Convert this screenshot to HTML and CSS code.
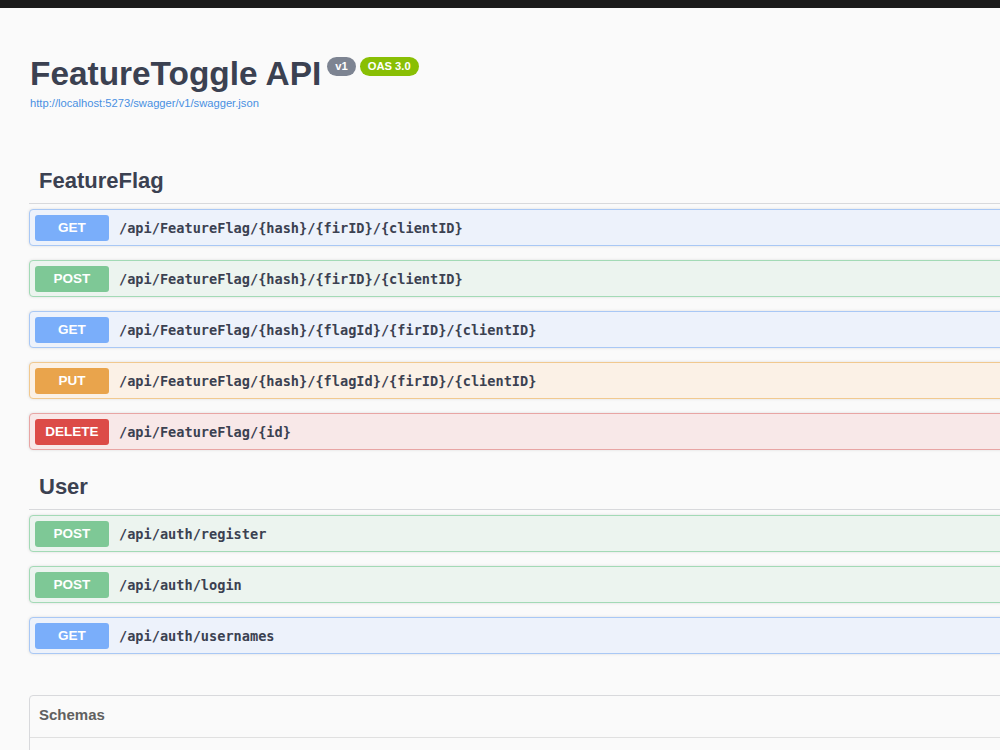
FILE: index.html
```html
<!DOCTYPE html>
<html lang="en">
<head>
<meta charset="utf-8">
<title>FeatureToggle API</title>
<link rel="stylesheet" href="styles.css">
</head>
<body>
<div class="topbar"></div>
<div class="wrapper">
  <section class="info">
    <h2 class="title">
      <span class="title-text">FeatureToggle API</span>
      <span class="badge badge-version">v1</span>
      <span class="badge badge-oas">OAS 3.0</span>
    </h2>
    <a class="spec-link" href="#">http://localhost:5273/swagger/v1/swagger.json</a>
  </section>

  <section class="tag-section">
    <h3 class="tag">FeatureFlag</h3>
    <div class="opblock op-get"><span class="method">GET</span><span class="path">/api/FeatureFlag/{hash}/{firID}/{clientID}</span></div>
    <div class="opblock op-post"><span class="method">POST</span><span class="path">/api/FeatureFlag/{hash}/{firID}/{clientID}</span></div>
    <div class="opblock op-get"><span class="method">GET</span><span class="path">/api/FeatureFlag/{hash}/{flagId}/{firID}/{clientID}</span></div>
    <div class="opblock op-put"><span class="method">PUT</span><span class="path">/api/FeatureFlag/{hash}/{flagId}/{firID}/{clientID}</span></div>
    <div class="opblock op-delete"><span class="method">DELETE</span><span class="path">/api/FeatureFlag/{id}</span></div>
  </section>

  <section class="tag-section">
    <h3 class="tag">User</h3>
    <div class="opblock op-post"><span class="method">POST</span><span class="path">/api/auth/register</span></div>
    <div class="opblock op-post"><span class="method">POST</span><span class="path">/api/auth/login</span></div>
    <div class="opblock op-get"><span class="method">GET</span><span class="path">/api/auth/usernames</span></div>
  </section>

  <section class="models">
    <h4 class="models-title">Schemas</h4>
    <div class="models-body"></div>
  </section>
</div>
</body>
</html>
```

FILE: styles.css
```css
html, body {
  margin: 0;
  padding: 0;
  overflow: hidden;
}
body {
  background: #fafafa;
  font-family: "Liberation Sans", Arial, sans-serif;
  color: #3b4151;
}
.topbar {
  height: 8px;
  background: #1b1b1b;
}
.wrapper {
  width: 1100px;
  padding-left: 29px;
}
.info {
  margin-top: 46px;
}
.title {
  display: flex;
  align-items: flex-start;
  margin: 0;
  font-size: 33.4px;
  line-height: 40px;
  font-weight: bold;
  color: #3b4151;
  padding-left: 1px;
}
.badge {
  display: inline-block;
  margin-top: 3px;
  height: 19px;
  line-height: 19px;
  padding: 0 8px;
  border-radius: 10px;
  font-size: 11.2px;
  font-weight: bold;
  color: #fff;
}
.badge-version {
  background: #7d8492;
  margin-left: 6px;
}
.badge-oas {
  background: #89bf04;
  margin-left: 4px;
}
.spec-link {
  display: block;
  margin-top: 2px;
  padding-left: 1px;
  font-size: 11.2px;
  line-height: 14px;
  color: #4990e2;
  text-decoration: none;
}
.info + .tag-section {
  margin-top: 48px;
}
.tag {
  margin: 0 0 5px;
  height: 45px;
  line-height: 45px;
  padding-left: 10px;
  font-size: 22px;
  font-weight: bold;
  color: #3b4151;
  border-bottom: 1px solid #d8d9dc;
}
.opblock {
  display: flex;
  align-items: center;
  height: 35px;
  margin-bottom: 14px;
  padding: 0 5px;
  border: 1px solid;
  border-radius: 4px;
  box-shadow: 0 0 3px rgba(0, 0, 0, 0.12);
}
.method {
  width: 74px;
  height: 26px;
  line-height: 26px;
  text-align: center;
  border-radius: 3px;
  color: #fff;
  font-size: 13.5px;
  font-weight: bold;
  flex-shrink: 0;
}
.path {
  margin-left: 10px;
  font-family: "DejaVu Sans Mono", monospace;
  font-weight: bold;
  font-size: 13.6px;
  color: #3b4151;
}
.op-get {
  background: #edf2fb;
  border-color: #a9c8f5;
}
.op-get .method {
  background: #7aaefa;
}
.op-post {
  background: #ecf4ef;
  border-color: #a3dab6;
}
.op-post .method {
  background: #7ec896;
}
.op-put {
  background: #fbf1e6;
  border-color: #f1c98f;
}
.op-put .method {
  background: #e9a44c;
}
.op-delete {
  background: #f8e8e8;
  border-color: #e8a5a4;
}
.op-delete .method {
  background: #dc4b47;
}
.models {
  margin-top: 41px;
  border: 1px solid #d8d9dc;
  border-radius: 4px;
}
.models-title {
  margin: 0;
  height: 37px;
  line-height: 37px;
  padding: 0 0 4px 9px;
  font-size: 15px;
  font-weight: bold;
  color: #606060;
  border-bottom: 1px solid #e0e0e0;
}
.models-body {
  height: 60px;
}
```
